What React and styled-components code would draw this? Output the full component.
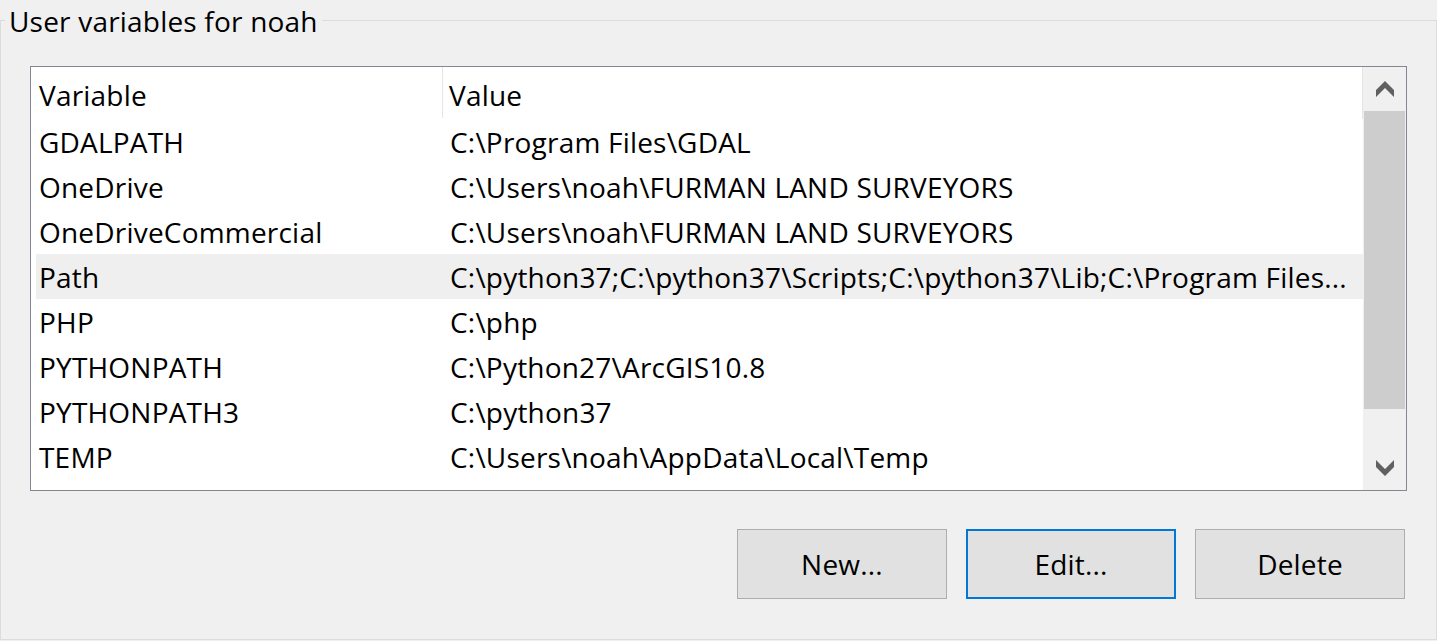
import React from "react";
import styled, { createGlobalStyle } from "styled-components";

const Global = createGlobalStyle`
  html, body { margin: 0; padding: 0; background: #f0f0f0; }
  body { font-family: "Open Sans", "Noto Sans", sans-serif; color: #000; letter-spacing: 0.2px; }
`;

const Page = styled.div`
  width: 1437px;
  height: 641px;
  padding-top: 20px;
  box-sizing: border-box;
  background: #f0f0f0;
`;

const Group = styled.section`
  position: relative;
  width: 1437px;
  height: 620px;
  box-sizing: border-box;
  border: 1px solid #dcdcdc;
  padding: 45px 29px 0 29px;
  display: flex;
  flex-direction: column;
`;

const Legend = styled.span`
  position: absolute;
  left: 4px;
  top: -19px;
  padding: 0 4px;
  background: #f0f0f0;
  font-size: 28px;
  line-height: 38px;
`;

const ListBox = styled.div`
  width: 1377px;
  height: 425px;
  box-sizing: border-box;
  border: 1px solid #828790;
  background: #fff;
  display: flex;
  overflow: hidden;
`;

const ListContent = styled.div`
  flex: 1;
  display: flex;
  flex-direction: column;
  min-width: 0;
`;

const Header = styled.div`
  height: 52px;
  display: flex;
  border-right: 1px solid #e5e5e5;
  flex-shrink: 0;
`;

const HeaderCell = styled.div`
  flex: ${(p) => (p.$first ? "0 0 412px" : "1")};
  border-right: ${(p) => (p.$first ? "1px solid #e5e5e5" : "none")};
  padding-left: ${(p) => (p.$first ? "8px" : "6px")};
  padding-top: 4px;
  box-sizing: border-box;
  display: flex;
  align-items: center;
  font-size: 28px;
  height: 51px;
`;

const Row = styled.div`
  height: 45px;
  flex-shrink: 0;
  margin-left: 5px;
  display: flex;
  align-items: center;
  background: ${(p) => (p.$selected ? "#efefef" : "transparent")};
  font-size: 28px;
  white-space: nowrap;
`;

const Cell = styled.div`
  flex: ${(p) => (p.$first ? "0 0 408px" : "1")};
  padding-left: ${(p) => (p.$first ? "3px" : "6px")};
  box-sizing: border-box;
  overflow: hidden;
  white-space: nowrap;
`;

const Scrollbar = styled.div`
  width: 43px;
  flex: 0 0 43px;
  background: #f0f0f0;
  display: flex;
  flex-direction: column;
`;

const ArrowButton = styled.div`
  height: 44px;
  flex: 0 0 44px;
  display: flex;
  align-items: center;
  justify-content: center;
`;

const Track = styled.div`
  flex: 1;
  display: flex;
  flex-direction: column;
`;

const Thumb = styled.div`
  height: 298px;
  margin: 0 1px;
  background: #cdcdcd;
`;

const ButtonRow = styled.div`
  margin-top: 38px;
  width: 1377px;
  box-sizing: border-box;
  padding-right: 2px;
  display: flex;
  justify-content: flex-end;
  gap: 19px;
`;

const Button = styled.button`
  width: 210px;
  height: 70px;
  box-sizing: border-box;
  background: #e1e1e1;
  border: ${(p) => (p.$focused ? "2px solid #0078d7" : "1px solid #adadad")};
  font-family: "Open Sans", "Noto Sans", sans-serif;
  letter-spacing: 0.2px;
  font-size: 28px;
  color: #000;
  padding: 0;
`;

const Chevron = ({ down }) => (
  <svg width="18" height="16" viewBox="0 0 18 16">
    <polygon
      points={
        down
          ? "0,0 9,9 18,0 18,7 9,16 0,7"
          : "0,9 9,0 18,9 18,16 9,7 0,16"
      }
      fill="#606060"
    />
  </svg>
);

const rows = [
  ["GDALPATH", "C:\\Program Files\\GDAL"],
  ["OneDrive", "C:\\Users\\noah\\FURMAN LAND SURVEYORS"],
  ["OneDriveCommercial", "C:\\Users\\noah\\FURMAN LAND SURVEYORS"],
  ["Path", "C:\\python37;C:\\python37\\Scripts;C:\\python37\\Lib;C:\\Program Files..."],
  ["PHP", "C:\\php"],
  ["PYTHONPATH", "C:\\Python27\\ArcGIS10.8"],
  ["PYTHONPATH3", "C:\\python37"],
  ["TEMP", "C:\\Users\\noah\\AppData\\Local\\Temp"],
];

export default function App() {
  return (
    <>
      <Global />
      <Page>
        <Group>
          <Legend>User variables for noah</Legend>
          <ListBox>
            <ListContent>
              <Header>
                <HeaderCell $first>Variable</HeaderCell>
                <HeaderCell>Value</HeaderCell>
              </Header>
              {rows.map(([k, v]) => (
                <Row key={k} $selected={k === "Path"}>
                  <Cell $first>{k}</Cell>
                  <Cell>{v}</Cell>
                </Row>
              ))}
            </ListContent>
            <Scrollbar>
              <ArrowButton>
                <Chevron />
              </ArrowButton>
              <Track>
                <Thumb />
              </Track>
              <ArrowButton>
                <Chevron down />
              </ArrowButton>
            </Scrollbar>
          </ListBox>
          <ButtonRow>
            <Button>New...</Button>
            <Button $focused>Edit...</Button>
            <Button>Delete</Button>
          </ButtonRow>
        </Group>
      </Page>
    </>
  );
}
